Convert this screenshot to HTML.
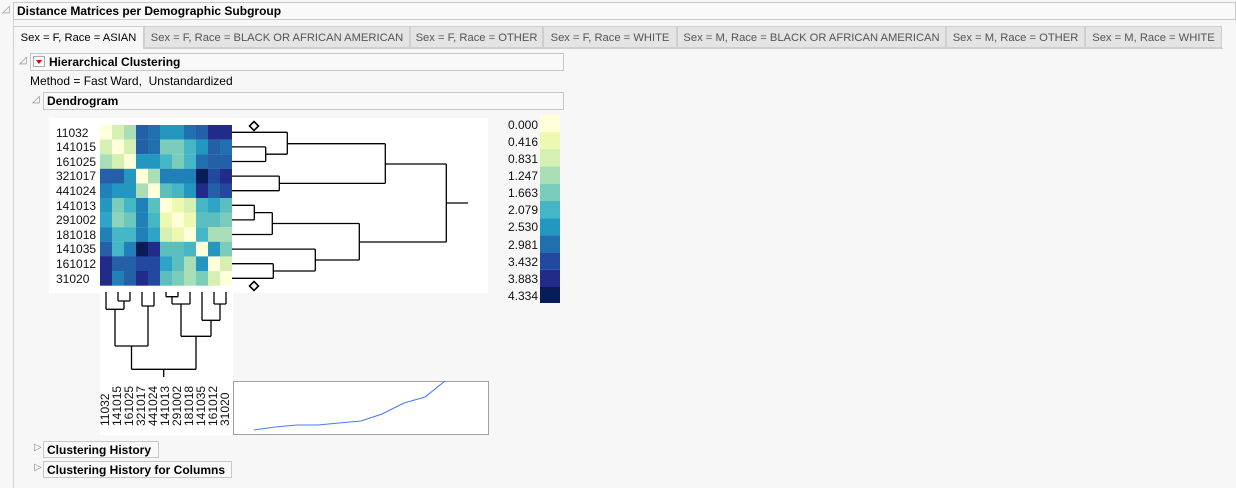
<!DOCTYPE html>
<html><head><meta charset="utf-8"><style>
body{margin:0;width:1236px;height:488px;background:#f7f7f7;font-family:"Liberation Sans",sans-serif;font-size:12px;position:relative;overflow:hidden;color:#000}
.a{position:absolute}
.box{position:absolute;border:1px solid #c8c8c8;background:#f9f9f9;font-weight:bold;font-size:12px;line-height:16px;padding-left:3px;box-sizing:border-box}
.tab{position:absolute;top:26px;height:22px;line-height:22px;background:#e4e4e4;border:1px solid #cfcfcf;color:#555;padding:0;text-align:center;font-size:11.2px;box-sizing:border-box;white-space:nowrap;overflow:visible}
.tri{position:absolute;font-size:10px;color:#888}
</style></head><body>
<div class="a" style="left:13px;top:20px;width:1px;height:468px;background:#d4d4d4"></div>
<div class="tri" style="left:2px;top:4px">◿</div>
<div class="box" style="left:13px;top:2px;width:1223px;height:18px">Distance Matrices per Demographic Subgroup</div>
<div class="a" style="left:13px;top:48px;width:1210px;height:1px;background:#cfcfcf"></div>
<div class="tab" style="left:13px;width:131px;background:#f7f7f7;color:#000;border-bottom:none;height:23px">Sex = F, Race = ASIAN</div>
<div class="tab" style="left:144px;width:266px">Sex = F, Race = BLACK OR AFRICAN AMERICAN</div>
<div class="tab" style="left:410px;width:133px">Sex = F, Race = OTHER</div>
<div class="tab" style="left:543px;width:134px">Sex = F, Race = WHITE</div>
<div class="tab" style="left:677px;width:269px">Sex = M, Race = BLACK OR AFRICAN AMERICAN</div>
<div class="tab" style="left:946px;width:139px">Sex = M, Race = OTHER</div>
<div class="tab" style="left:1085px;width:137px">Sex = M, Race = WHITE</div>
<div class="tri" style="left:19px;top:55px">◿</div>
<div class="box" style="left:30px;top:53px;width:534px;height:18px;padding-left:18px">Hierarchical Clustering</div>
<div class="a" style="left:33px;top:56px;width:12px;height:11px;border:1px solid #aaa;background:#fff;box-sizing:border-box"><div style="position:absolute;left:2px;top:3px;border-left:3px solid transparent;border-right:3px solid transparent;border-top:4px solid #d00000"></div></div>
<div class="a" style="left:30px;top:74px">Method = Fast Ward,&nbsp; Unstandardized</div>
<div class="tri" style="left:32px;top:94px">◿</div>
<div class="box" style="left:43px;top:92px;width:521px;height:18px">Dendrogram</div>
<svg class="a" style="left:0;top:0" width="1236" height="488">
<rect x="49" y="118" width="439" height="175" fill="#fff"/>
<rect x="100" y="292" width="133" height="143" fill="#fff"/>
<g font-size="12" fill="#111">
<text x="56" y="137">11032</text><text x="56" y="151">141015</text><text x="56" y="166">161025</text><text x="56" y="180">321017</text><text x="56" y="195">441024</text><text x="56" y="210">141013</text><text x="56" y="224">291002</text><text x="56" y="239">181018</text><text x="56" y="253">141035</text><text x="56" y="268">161012</text><text x="56" y="283">31020</text>
</g>
<g transform="translate(100,125)">
<rect x="0" y="0" width="12" height="14.7" fill="#ffffd9"/><rect x="12" y="0" width="12" height="14.7" fill="#d6efb3"/><rect x="24" y="0" width="12" height="14.7" fill="#aadeb6"/><rect x="36" y="0" width="12" height="14.7" fill="#2360a8"/><rect x="48" y="0" width="12" height="14.7" fill="#2070b0"/><rect x="60" y="0" width="12" height="14.7" fill="#2497c1"/><rect x="72" y="0" width="12" height="14.7" fill="#2497c1"/><rect x="84" y="0" width="12" height="14.7" fill="#2070b0"/><rect x="96" y="0" width="12" height="14.7" fill="#2360a8"/><rect x="108" y="0" width="12" height="14.7" fill="#222a8a"/><rect x="120" y="0" width="12" height="14.7" fill="#222a8a"/>
<rect x="0" y="14.6" width="12" height="14.7" fill="#d6efb3"/><rect x="12" y="14.6" width="12" height="14.7" fill="#ffffd9"/><rect x="24" y="14.6" width="12" height="14.7" fill="#d6efb3"/><rect x="36" y="14.6" width="12" height="14.7" fill="#2360a8"/><rect x="48" y="14.6" width="12" height="14.7" fill="#2070b0"/><rect x="60" y="14.6" width="12" height="14.7" fill="#7accbb"/><rect x="72" y="14.6" width="12" height="14.7" fill="#7accbb"/><rect x="84" y="14.6" width="12" height="14.7" fill="#45b6c6"/><rect x="96" y="14.6" width="12" height="14.7" fill="#2497c1"/><rect x="108" y="14.6" width="12" height="14.7" fill="#2360a8"/><rect x="120" y="14.6" width="12" height="14.7" fill="#2070b0"/>
<rect x="0" y="29.2" width="12" height="14.7" fill="#aadeb6"/><rect x="12" y="29.2" width="12" height="14.7" fill="#d6efb3"/><rect x="24" y="29.2" width="12" height="14.7" fill="#ffffd9"/><rect x="36" y="29.2" width="12" height="14.7" fill="#2497c1"/><rect x="48" y="29.2" width="12" height="14.7" fill="#2497c1"/><rect x="60" y="29.2" width="12" height="14.7" fill="#45b6c6"/><rect x="72" y="29.2" width="12" height="14.7" fill="#7accbb"/><rect x="84" y="29.2" width="12" height="14.7" fill="#45b6c6"/><rect x="96" y="29.2" width="12" height="14.7" fill="#2070b0"/><rect x="108" y="29.2" width="12" height="14.7" fill="#2360a8"/><rect x="120" y="29.2" width="12" height="14.7" fill="#2360a8"/>
<rect x="0" y="43.8" width="12" height="14.7" fill="#2360a8"/><rect x="12" y="43.8" width="12" height="14.7" fill="#2360a8"/><rect x="24" y="43.8" width="12" height="14.7" fill="#2497c1"/><rect x="36" y="43.8" width="12" height="14.7" fill="#ffffd9"/><rect x="48" y="43.8" width="12" height="14.7" fill="#aadeb6"/><rect x="60" y="43.8" width="12" height="14.7" fill="#2080b8"/><rect x="72" y="43.8" width="12" height="14.7" fill="#2080b8"/><rect x="84" y="43.8" width="12" height="14.7" fill="#2080b8"/><rect x="96" y="43.8" width="12" height="14.7" fill="#081d58"/><rect x="108" y="43.8" width="12" height="14.7" fill="#2348a0"/><rect x="120" y="43.8" width="12" height="14.7" fill="#222a8a"/>
<rect x="0" y="58.4" width="12" height="14.7" fill="#2080b8"/><rect x="12" y="58.4" width="12" height="14.7" fill="#2497c1"/><rect x="24" y="58.4" width="12" height="14.7" fill="#2497c1"/><rect x="36" y="58.4" width="12" height="14.7" fill="#aadeb6"/><rect x="48" y="58.4" width="12" height="14.7" fill="#ffffd9"/><rect x="60" y="58.4" width="12" height="14.7" fill="#5bbfc0"/><rect x="72" y="58.4" width="12" height="14.7" fill="#45b6c6"/><rect x="84" y="58.4" width="12" height="14.7" fill="#2497c1"/><rect x="96" y="58.4" width="12" height="14.7" fill="#222a8a"/><rect x="108" y="58.4" width="12" height="14.7" fill="#2360a8"/><rect x="120" y="58.4" width="12" height="14.7" fill="#2348a0"/>
<rect x="0" y="73" width="12" height="14.7" fill="#2497c1"/><rect x="12" y="73" width="12" height="14.7" fill="#7accbb"/><rect x="24" y="73" width="12" height="14.7" fill="#45b6c6"/><rect x="36" y="73" width="12" height="14.7" fill="#2080b8"/><rect x="48" y="73" width="12" height="14.7" fill="#5bbfc0"/><rect x="60" y="73" width="12" height="14.7" fill="#ffffd9"/><rect x="72" y="73" width="12" height="14.7" fill="#edf8b1"/><rect x="84" y="73" width="12" height="14.7" fill="#d6efb3"/><rect x="96" y="73" width="12" height="14.7" fill="#45b6c6"/><rect x="108" y="73" width="12" height="14.7" fill="#2ea5c6"/><rect x="120" y="73" width="12" height="14.7" fill="#5bbfc0"/>
<rect x="0" y="87.6" width="12" height="14.7" fill="#2ea5c6"/><rect x="12" y="87.6" width="12" height="14.7" fill="#8ed4b8"/><rect x="24" y="87.6" width="12" height="14.7" fill="#6cc7bd"/><rect x="36" y="87.6" width="12" height="14.7" fill="#2080b8"/><rect x="48" y="87.6" width="12" height="14.7" fill="#45b6c6"/><rect x="60" y="87.6" width="12" height="14.7" fill="#edf8b1"/><rect x="72" y="87.6" width="12" height="14.7" fill="#ffffd9"/><rect x="84" y="87.6" width="12" height="14.7" fill="#edf8b1"/><rect x="96" y="87.6" width="12" height="14.7" fill="#5bbfc0"/><rect x="108" y="87.6" width="12" height="14.7" fill="#5bbfc0"/><rect x="120" y="87.6" width="12" height="14.7" fill="#7accbb"/>
<rect x="0" y="102.2" width="12" height="14.7" fill="#2080b8"/><rect x="12" y="102.2" width="12" height="14.7" fill="#45b6c6"/><rect x="24" y="102.2" width="12" height="14.7" fill="#45b6c6"/><rect x="36" y="102.2" width="12" height="14.7" fill="#2080b8"/><rect x="48" y="102.2" width="12" height="14.7" fill="#2ea5c6"/><rect x="60" y="102.2" width="12" height="14.7" fill="#d6efb3"/><rect x="72" y="102.2" width="12" height="14.7" fill="#edf8b1"/><rect x="84" y="102.2" width="12" height="14.7" fill="#ffffd9"/><rect x="96" y="102.2" width="12" height="14.7" fill="#45b6c6"/><rect x="108" y="102.2" width="12" height="14.7" fill="#aadeb6"/><rect x="120" y="102.2" width="12" height="14.7" fill="#aadeb6"/>
<rect x="0" y="116.8" width="12" height="14.7" fill="#2360a8"/><rect x="12" y="116.8" width="12" height="14.7" fill="#45b6c6"/><rect x="24" y="116.8" width="12" height="14.7" fill="#2080b8"/><rect x="36" y="116.8" width="12" height="14.7" fill="#081d58"/><rect x="48" y="116.8" width="12" height="14.7" fill="#222a8a"/><rect x="60" y="116.8" width="12" height="14.7" fill="#5bbfc0"/><rect x="72" y="116.8" width="12" height="14.7" fill="#5bbfc0"/><rect x="84" y="116.8" width="12" height="14.7" fill="#45b6c6"/><rect x="96" y="116.8" width="12" height="14.7" fill="#ffffd9"/><rect x="108" y="116.8" width="12" height="14.7" fill="#2497c1"/><rect x="120" y="116.8" width="12" height="14.7" fill="#7accbb"/>
<rect x="0" y="131.4" width="12" height="14.7" fill="#222a8a"/><rect x="12" y="131.4" width="12" height="14.7" fill="#2360a8"/><rect x="24" y="131.4" width="12" height="14.7" fill="#2360a8"/><rect x="36" y="131.4" width="12" height="14.7" fill="#2348a0"/><rect x="48" y="131.4" width="12" height="14.7" fill="#2348a0"/><rect x="60" y="131.4" width="12" height="14.7" fill="#2ea5c6"/><rect x="72" y="131.4" width="12" height="14.7" fill="#5bbfc0"/><rect x="84" y="131.4" width="12" height="14.7" fill="#aadeb6"/><rect x="96" y="131.4" width="12" height="14.7" fill="#2497c1"/><rect x="108" y="131.4" width="12" height="14.7" fill="#ffffd9"/><rect x="120" y="131.4" width="12" height="14.7" fill="#d6efb3"/>
<rect x="0" y="146" width="12" height="14.7" fill="#222a8a"/><rect x="12" y="146" width="12" height="14.7" fill="#2080b8"/><rect x="24" y="146" width="12" height="14.7" fill="#2360a8"/><rect x="36" y="146" width="12" height="14.7" fill="#222a8a"/><rect x="48" y="146" width="12" height="14.7" fill="#2348a0"/><rect x="60" y="146" width="12" height="14.7" fill="#5bbfc0"/><rect x="72" y="146" width="12" height="14.7" fill="#7accbb"/><rect x="84" y="146" width="12" height="14.7" fill="#aadeb6"/><rect x="96" y="146" width="12" height="14.7" fill="#7accbb"/><rect x="108" y="146" width="12" height="14.7" fill="#d6efb3"/><rect x="120" y="146" width="12" height="14.7" fill="#ffffd9"/>
</g>
<g stroke="#000" stroke-width="1.3" fill="none">
<path d="M232 132.3H287.3M232 146.9H265.7M232 161.5H265.7M265.7 146.9V161.5M265.7 154.2H287.3M287.3 132.3V154.2M287.3 143.7H385.3"/>
<path d="M232 176.1H279.3M232 190.7H279.3M279.3 176.1V190.7M279.3 183.4H385.3M385.3 143.7V183.4M385.3 164H446.3"/>
<path d="M232 205.3H254.3M232 219.9H254.3M254.3 205.3V219.9M254.3 212.6H272.3M232 234.5H272.3M272.3 212.6V234.5M272.3 223.5H359.3"/>
<path d="M232 249.1H315.3M232 263.7H273.3M232 278.3H273.3M273.3 263.7V278.3M273.3 271H315.3M315.3 249.1V271M315.3 260H359.3M359.3 223.5V260M359.3 242H446.3M446.3 164V242M446.3 203H468"/>
<path d="M106 292V309.3M118 292V301M130 292V301M118 301H130M124 301V309.3M106 309.3H124M115 309.3V346"/>
<path d="M142 292V306M154 292V306M142 306H154M148 306V346M115 346H148M131.5 346V369.3"/>
<path d="M166 292V296.7M178 292V296.7M166 296.7H178M172 296.7V304M190 292V304M172 304H190M181 304V336.3"/>
<path d="M202 292V320.3M214 292V304M226 292V304M214 304H226M220 304V320.3M202 320.3H220M211 320.3V336.3M181 336.3H211M196 336.3V369.3M131.5 369.3H196M163.7 369.3V377"/>
</g>
<g fill="#fff" stroke="#000" stroke-width="1.6">
<path d="M254 121.5L258.5 126L254 130.5L249.5 126Z"/>
<path d="M254 281.5L258.5 286L254 290.5L249.5 286Z"/>
</g>
<g font-size="12" fill="#111">
<text transform="translate(109,426) rotate(-90)">11032</text>
<text transform="translate(121,426) rotate(-90)">141015</text>
<text transform="translate(133,426) rotate(-90)">161025</text>
<text transform="translate(145,426) rotate(-90)">321017</text>
<text transform="translate(157,426) rotate(-90)">441024</text>
<text transform="translate(169,426) rotate(-90)">141013</text>
<text transform="translate(181,426) rotate(-90)">291002</text>
<text transform="translate(193,426) rotate(-90)">181018</text>
<text transform="translate(205,426) rotate(-90)">141035</text>
<text transform="translate(217,426) rotate(-90)">161012</text>
<text transform="translate(229,426) rotate(-90)">31020</text>
</g>
<rect x="233.5" y="381.5" width="255" height="53" fill="#fff" stroke="#a0a0a0"/>
<polyline points="254,430 275,427 297,425 318,425 339,423 361,421 382,414 404,403 425,397 445,381" fill="none" stroke="#4a7bf0" stroke-width="1.1"/>
<rect x="540" y="115" width="20" height="17.2" fill="#ffffd9"/>
<rect x="540" y="132.2" width="20" height="17.2" fill="#edf8b1"/>
<rect x="540" y="149.4" width="20" height="17.2" fill="#d6efb3"/>
<rect x="540" y="166.6" width="20" height="17.2" fill="#aadeb6"/>
<rect x="540" y="183.8" width="20" height="17.2" fill="#7accbb"/>
<rect x="540" y="201" width="20" height="17.2" fill="#45b6c6"/>
<rect x="540" y="218.2" width="20" height="17.2" fill="#2497c1"/>
<rect x="540" y="235.4" width="20" height="17.2" fill="#2070b0"/>
<rect x="540" y="252.6" width="20" height="17.2" fill="#2348a0"/>
<rect x="540" y="269.8" width="20" height="17.2" fill="#222a8a"/>
<rect x="540" y="287" width="20" height="16" fill="#081d58"/>
<g font-size="12" fill="#111">
<text x="508" y="129">0.000</text><text x="508" y="146">0.416</text><text x="508" y="163">0.831</text><text x="508" y="180">1.247</text><text x="508" y="197">1.663</text><text x="508" y="214">2.079</text><text x="508" y="231">2.530</text><text x="508" y="249">2.981</text><text x="508" y="266">3.432</text><text x="508" y="283">3.883</text><text x="508" y="300">4.334</text>
</g>
</svg>
<div class="tri" style="left:34px;top:442px">▷</div>
<div class="box" style="left:43px;top:441px;width:116px;height:17px">Clustering History</div>
<div class="tri" style="left:34px;top:462px">▷</div>
<div class="box" style="left:43px;top:461px;width:189px;height:17px">Clustering History for Columns</div>
</body></html>
